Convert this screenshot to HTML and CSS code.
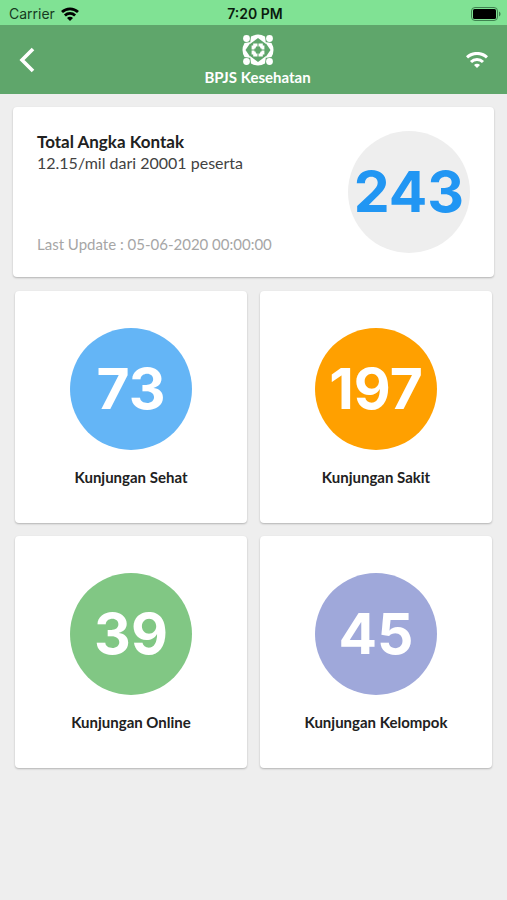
FILE: index.html
```html
<!DOCTYPE html>
<html lang="id">
<head>
    <meta charset="UTF-8">
    <meta name="viewport" content="width=device-width, initial-scale=1.0">
    <title>BPJS Kesehatan - Angka Kontak</title>
    <link rel="stylesheet" href="styles.css">
</head>
<body>
    <div class="status-bar">
        <div class="carrier">
            <span>Carrier</span>
            <svg width="18" height="14" viewBox="0 0 18 14" fill="none" stroke="#000" stroke-width="2.8">
                <path d="M1 5a11.6 11.6 0 0 1 16 0"/>
                <path d="M3.9 8.5a7.4 7.4 0 0 1 10.2 0"/>
                <path d="M9 14l-3-3a4.2 4.2 0 0 1 6 0z" fill="#000" stroke="none"/>
            </svg>
        </div>
        <span class="clock">7:20 PM</span>
        <svg class="battery" width="30" height="14" viewBox="0 0 30 14">
            <rect x="0.5" y="0.5" width="26" height="13" rx="3.5" fill="none" stroke="#3f8250"/>
            <rect x="2" y="2" width="23" height="10" rx="1.5" fill="#000"/>
            <path d="M28 4.5v5c2-.8 2-4.2 0-5z" fill="#3f8250"/>
        </svg>
    </div>

    <header class="app-header">
        <button class="icon-button" type="button" aria-label="Kembali">
            <svg width="16" height="26" viewBox="0 0 16 26" fill="none" stroke="#fff" stroke-width="3.6">
                <path d="M14 2L3 13l11 11"/>
            </svg>
        </button>
        <div class="brand">
            <svg width="32" height="32" viewBox="0 0 32 32" fill="#fff">
                <circle cx="4.5" cy="4.5" r="3.4"/>
                <circle cx="27.5" cy="4.5" r="3.4"/>
                <circle cx="4.5" cy="27.5" r="3.4"/>
                <circle cx="27.5" cy="27.5" r="3.4"/>
                <!-- outer ring -->
                <path d="M9 2.500Q16-1.500 23 2.500L24 10 16 4 8 10z"/>
                <path d="M9 29.5Q16 33.5 23 29.5L24 22 16 28 8 22z"/>
                <path d="M2.5 9Q-1.500 16 2.500 23L9 24 3.500 16 9 8z"/>
                <path d="M29.5 9Q33.5 16 29.5 23L23 24 28.5 16 23 8z"/>
                <!-- inner flower -->
                <g fill="none" stroke="#fff" stroke-width="2.8">
                    <path d="M12.6 13.5v-2.500h2.900M16.500 11h2.900v2.500"/>
                    <path d="M12.6 18.5v2.500h2.900M16.500 21h2.900v-2.500"/>
                    <path d="M13.500 13h-2.500v2.500M11 16.500v2.500h2.500"/>
                    <path d="M18.500 13h2.500v2.500M21 16.500v2.500h-2.500"/>
                </g>
            </svg>
            <span class="brand-name">BPJS Kesehatan</span>
        </div>
        <svg class="signal" width="22" height="16" viewBox="0 0 22 16" fill="none" stroke="#fff" stroke-width="3">
            <path d="M1 5.4a14.5 14.5 0 0 1 20 0"/>
            <path d="M5 10a8.5 8.5 0 0 1 12 0"/>
            <path d="M11 16l-3-3a4.2 4.2 0 0 1 6 0z" fill="#fff" stroke="none"/>
        </svg>
    </header>

    <main>
        <section class="card total">
            <div class="total-info">
                <div>
                    <h1>Total Angka Kontak</h1>
                    <p>12.15/mil dari 20001 peserta</p>
                </div>
                <p class="updated">Last Update : 05-06-2020 00:00:00</p>
            </div>
            <div class="circle total-circle">243</div>
        </section>

        <div class="visits">
            <section class="card visit">
                <div class="circle blue">73</div>
                <h2>Kunjungan Sehat</h2>
            </section>
            <section class="card visit">
                <div class="circle orange">197</div>
                <h2>Kunjungan Sakit</h2>
            </section>
            <section class="card visit">
                <div class="circle green">39</div>
                <h2>Kunjungan Online</h2>
            </section>
            <section class="card visit">
                <div class="circle purple">45</div>
                <h2>Kunjungan Kelompok</h2>
            </section>
        </div>
    </main>
</body>
</html>
```
FILE: styles.css
```css
:root {
    --header: #5fa66b;
    --status: #80e294;
    --page: #eeeeee;
    --text: #212121;
}

* {
    box-sizing: border-box;
}

body {
    margin: 0;
    min-height: 100vh;
    background: var(--page);
    color: var(--text);
    font-family: Lato, sans-serif;
}

h1, h2, p {
    margin: 0;
}

svg {
    display: block;
}

/* Status bar */
.status-bar {
    display: grid;
    grid-template-columns: 1fr auto 1fr;
    align-items: center;
    height: 25px;
    padding: 2px 6px 0 9px;
    background: var(--status);
    font-family: Inter, sans-serif;
    font-size: 14px;
    line-height: 20px;
}

.carrier {
    display: flex;
    align-items: center;
    gap: 6px;
    color: #163a1f;
}

.clock {
    color: #0a1a0e;
    font-weight: 600;
}

.battery {
    justify-self: end;
}

/* Header */
.app-header {
    display: grid;
    grid-template-columns: 1fr auto 1fr;
    align-items: center;
    height: 69px;
    padding: 0 19px;
    background: var(--header);
}

.icon-button {
    justify-self: start;
    padding: 0;
    border: none;
    background: none;
    cursor: pointer;
}

.brand {
    display: flex;
    flex-direction: column;
    align-items: center;
    gap: 2px;
    padding-left: 8px;
}

.brand-name {
    color: #fff;
    font-size: 15px;
    font-weight: 700;
    line-height: 18px;
}

.signal {
    justify-self: end;
}

/* Cards */
main {
    padding: 13px;
}

.card {
    background: #fff;
    border-radius: 4px;
    box-shadow: 0 1px 2px rgba(0, 0, 0, 0.25);
}

.circle {
    display: flex;
    flex-shrink: 0;
    align-items: center;
    justify-content: center;
    width: 122px;
    height: 122px;
    border-radius: 50%;
    color: #fff;
    font-family: Inter, sans-serif;
    font-size: 57px;
    font-weight: 700;
    line-height: 60px;
}

.total {
    display: flex;
    justify-content: space-between;
    margin-bottom: 14px;
    padding: 24px;
}

.total-info {
    display: flex;
    flex-direction: column;
    justify-content: space-between;
    color: #424242;
    font-size: 16px;
    line-height: 21px;
}

.total-info h1 {
    color: var(--text);
    font-size: 17px;
    font-weight: 700;
}

.total-info .updated {
    color: #a6a6a6;
    font-size: 15px;
    line-height: 18px;
}

.total-circle {
    background: var(--page);
    color: #2196f3;
}

.visits {
    display: grid;
    grid-template-columns: 1fr 1fr;
    gap: 13px;
    padding: 0 2px;
}

.visit {
    display: flex;
    flex-direction: column;
    align-items: center;
    justify-content: center;
    gap: 18px;
    aspect-ratio: 1;
}

.visit h2 {
    font-size: 15px;
    font-weight: 700;
    line-height: 18px;
}

.blue {
    background: #64b5f6;
}

.orange {
    background: #ffa000;
}

.green {
    background: #81c784;
}

.purple {
    background: #9fa8da;
}
```
